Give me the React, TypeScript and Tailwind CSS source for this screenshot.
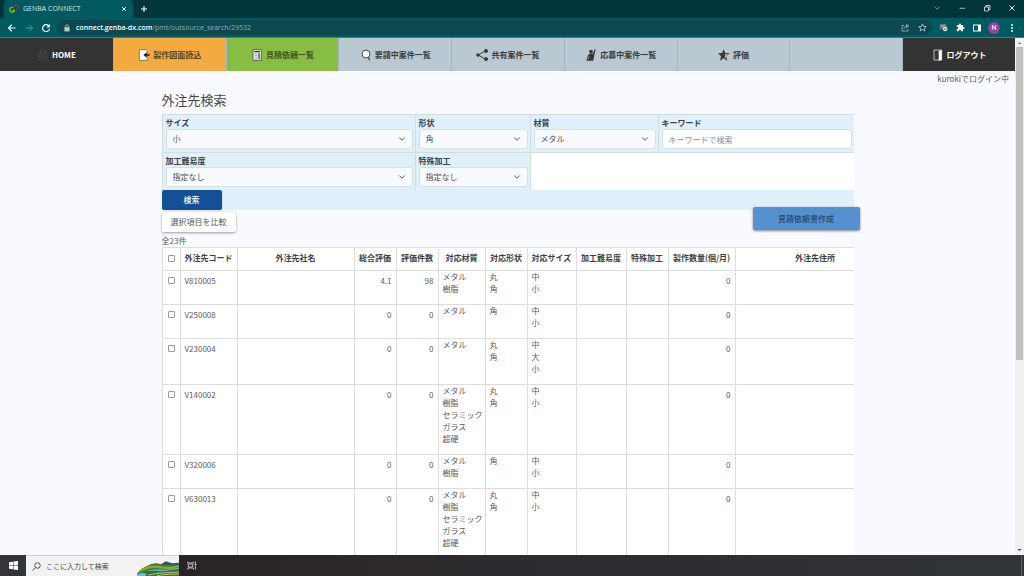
import React from "react";

const materialsAll = ["メタル", "樹脂", "セラミック", "ガラス", "超硬"];

type Row = {
  code: string;
  score: string;
  count: string;
  materials: string[];
  shapes: string[];
  sizes: string[];
};

const rows: Row[] = [
  { code: "V810005", score: "4.1", count: "98", materials: ["メタル", "樹脂"], shapes: ["丸", "角"], sizes: ["中", "小"] },
  { code: "V250008", score: "0", count: "0", materials: ["メタル"], shapes: ["角"], sizes: ["中", "小"] },
  { code: "V230004", score: "0", count: "0", materials: ["メタル"], shapes: ["丸", "角"], sizes: ["中", "大", "小"] },
  { code: "V140002", score: "0", count: "0", materials: materialsAll, shapes: ["丸", "角"], sizes: ["中", "小"] },
  { code: "V320006", score: "0", count: "0", materials: ["メタル", "樹脂"], shapes: ["角"], sizes: ["中", "小"] },
  { code: "V630013", score: "0", count: "0", materials: materialsAll, shapes: ["丸", "角"], sizes: ["中", "小"] },
];

function TabStrip() {
  return (
    <div className="flex h-[18px] items-stretch bg-[#00363b] text-white">
      <div className="ml-1 flex w-[129px] items-center rounded-t-[4px] bg-[#005a5f] pr-[6px] pl-[5px]">
        <svg className="h-[10px] w-[10px]" viewBox="0 0 30 30" fill="none" aria-hidden="true">
          <path d="M13 11A7 7 0 1 0 16 20H10" stroke="#7fc31c" strokeWidth="4" />
          <path d="M15 15A7 7 0 1 1 21 17" stroke="#d7182a" strokeWidth="4" />
        </svg>
        <span className="ml-1 flex-1 font-['Open_Sans','Noto_Sans',sans-serif] text-[7px] leading-[12px] text-[#d5e5e6]">GENBA CONNECT</span>
        <button type="button" aria-label="タブを閉じる" className="flex">
          <svg className="h-[6px] w-[6px]" viewBox="0 0 12 12" stroke="#fff" strokeWidth="2" aria-hidden="true">
            <path d="M2 2l8 8M10 2l-8 8" />
          </svg>
        </button>
      </div>
      <button type="button" aria-label="新しいタブ" className="ml-[7px] flex items-center">
        <svg className="h-[8px] w-[8px]" viewBox="0 0 16 16" stroke="#fff" strokeWidth="2.200" aria-hidden="true">
          <path d="M8 2v12M2 8h12" />
        </svg>
      </button>
      <div className="ml-auto flex items-center gap-[17px] pr-[8px] pb-[3px]">
        <svg className="h-[8px] w-[8px]" viewBox="0 0 16 16" stroke="#9fb9bb" strokeWidth="1.600" fill="none" aria-hidden="true">
          <path d="M3 5.500l5 5 5-5" />
        </svg>
        <svg className="h-[8px] w-[8px]" viewBox="0 0 16 16" stroke="#cfdddd" strokeWidth="1.600" aria-hidden="true">
          <path d="M3 8.500h11" />
        </svg>
        <svg className="h-[8px] w-[8px]" viewBox="0 0 16 16" stroke="#e6eeee" strokeWidth="1.600" fill="none" aria-hidden="true">
          <path d="M3 6h8v8H3zM6 6V3h8v8h-3" />
        </svg>
        <svg className="h-[8px] w-[8px]" viewBox="0 0 16 16" stroke="#fff" strokeWidth="1.800" aria-hidden="true">
          <path d="M3 3l10 10M13 3L3 13" />
        </svg>
      </div>
    </div>
  );
}

function AddressBar() {
  return (
    <div className="flex h-[20px] items-center border-b border-[#2d8386] bg-[#005a5f] pr-[7px] pl-[7px]">
      <div className="flex items-center gap-[7px]">
        <svg className="h-[10px] w-[10px]" viewBox="0 0 20 20" stroke="#fff" strokeWidth="2.200" fill="none" aria-hidden="true">
          <path d="M17 10H3M9.500 3.500L3 10l6.500 6.500" />
        </svg>
        <svg className="h-[10px] w-[10px]" viewBox="0 0 20 20" stroke="#5f999b" strokeWidth="2" fill="none" aria-hidden="true">
          <path d="M3 10h14M10.500 3.500L17 10l-6.500 6.500" />
        </svg>
        <svg className="h-[10px] w-[10px]" viewBox="0 0 20 20" fill="none" aria-hidden="true">
          <path d="M16 6.500A7 7 0 1 0 17 11.500" stroke="#fff" strokeWidth="2.400" />
          <path d="M18 2v7h-7z" fill="#fff" />
        </svg>
      </div>
      <div className="ml-[6px] flex h-[15px] flex-1 items-center rounded-full bg-[#0c484f] pr-[5px] pl-[6px]">
        <svg className="h-[8px] w-[8px]" viewBox="0 0 14 14" aria-hidden="true">
          <path d="M2.500 5.500h9V13h-9z" fill="#b9cacb" />
          <path d="M4.500 6V4a2.500 2.500 0 0 1 5 0v2" stroke="#b9cacb" strokeWidth="1.400" fill="none" />
        </svg>
        <div className="ml-[5px] flex-1 font-['Open_Sans','Noto_Sans',sans-serif] text-[7px] leading-[12px] text-[#8fb0b2]">
          <span className="font-semibold text-white">connect.genba-dx.com</span>/pmt/outsource_search/29532
        </div>
        <svg className="h-[9px] w-[9px]" viewBox="0 0 18 18" stroke="#a8bfc1" strokeWidth="1.500" fill="none" aria-hidden="true">
          <path d="M6 5H2v11h12v-4M6 12c0-4 3-6 7-6M11 2.500L16 6l-5 3.500z" />
        </svg>
        <svg className="ml-[8px] h-[9px] w-[9px]" viewBox="0 0 18 18" stroke="#cfdfe0" strokeWidth="1.500" fill="none" aria-hidden="true">
          <path d="M9 1.800l2.200 4.900 5.300.5-4 3.500 1.200 5.200L9 13.200l-4.700 2.700 1.200-5.200-4-3.500 5.300-.5z" />
        </svg>
      </div>
      <div className="ml-[7px] flex items-center">
        <svg className="h-[9px] w-[9px]" viewBox="0 0 18 18" aria-hidden="true">
          <rect x="1" y="2" width="14" height="11" rx="2" fill="#6c6f70" />
          <path d="M4 5h8M4 8h8" stroke="#b0b4b4" strokeWidth="1.500" />
          <circle cx="12.500" cy="12" r="4.500" fill="#eee" />
          <path d="M10 12h5" stroke="#333" strokeWidth="1.800" />
        </svg>
        <svg className="ml-[8px] h-[9px] w-[9px]" viewBox="0 0 24 24" fill="#fff" aria-hidden="true">
          <path d="M20.500 11H19V7a2 2 0 0 0-2-2h-4V3.500a2.500 2.500 0 0 0-5 0V5H4a2 2 0 0 0-2 2v3.800h1.500a2.700 2.700 0 0 1 0 5.400H2V20a2 2 0 0 0 2 2h3.800v-1.500a2.700 2.700 0 0 1 5.400 0V22H17a2 2 0 0 0 2-2v-4h1.500a2.500 2.500 0 0 0 0-5z" />
        </svg>
        <svg className="ml-[8px] h-[8px] w-[8px]" viewBox="0 0 16 16" aria-hidden="true">
          <rect x="0" y="1" width="16" height="14" fill="#fff" />
          <rect x="2" y="3" width="8" height="10" fill="#005a5f" />
        </svg>
        <span className="ml-[7px] flex h-[12px] w-[12px] items-center justify-center rounded-full bg-[#8e44a0] font-['Roboto',sans-serif] text-[7px] leading-[12px] text-white">N</span>
        <svg className="ml-[7px] h-[10px] w-[10px]" viewBox="0 0 20 20" fill="#fff" aria-hidden="true">
          <circle cx="10" cy="4" r="1.900" />
          <circle cx="10" cy="10" r="1.900" />
          <circle cx="10" cy="16" r="1.900" />
        </svg>
      </div>
    </div>
  );
}

const navIcon = "h-[12px] w-[12px] shrink-0";

const icons = {
  home: (
    <svg className={navIcon} viewBox="0 0 36 36" stroke="#4c4c4c" strokeWidth="2.500" fill="none" aria-hidden="true">
      <path d="M10 10H4v23h14M10 28V3h12l7 7v6M21 3v8h8" />
      <circle cx="22" cy="22" r="6" />
      <path d="M27 27l6 7" />
    </svg>
  ),
  drawing: (
    <svg className={navIcon} viewBox="0 0 36 36" aria-hidden="true">
      <path d="M4 2h20l4 4v28H4z" fill="#fff" stroke="#6a5130" strokeWidth="2" />
      <path d="M35 15.500h-9V10l-10 8 10 8v-5.500h9z" fill="#222" />
    </svg>
  ),
  quote: (
    <svg className={navIcon} viewBox="0 0 36 36" aria-hidden="true">
      <path d="M6 2h25v32H6z" fill="#f0f0ee" stroke="#4d4d45" strokeWidth="2.500" />
      <path d="M10 8h17" stroke="#333" strokeWidth="4" />
      <path d="M11 15h8M11 20h8M11 25h8M11 30h8" stroke="#999" strokeWidth="2.400" />
      <path d="M24 13v17" stroke="#444" strokeWidth="4" />
    </svg>
  ),
  search: (
    <svg className={navIcon} viewBox="0 0 36 36" aria-hidden="true">
      <circle cx="18" cy="15" r="12" fill="#fff" stroke="#4a4a4a" strokeWidth="3" />
      <path d="M25 25l4 9" stroke="#4a4a4a" strokeWidth="4" />
    </svg>
  ),
  share: (
    <svg className={navIcon} viewBox="0 0 36 36" fill="#3c3735" stroke="#3c3735" strokeWidth="2.800" aria-hidden="true">
      <path d="M30 5L6 18l24 13" fill="none" />
      <circle cx="30" cy="6" r="4.500" />
      <circle cx="6" cy="18" r="4" />
      <circle cx="30" cy="30" r="4.500" />
    </svg>
  ),
  apply: (
    <svg className={navIcon} viewBox="0 0 36 36" fill="#3a3432" aria-hidden="true">
      <circle cx="18" cy="8" r="5.500" />
      <path d="M28 1l4 1-4 15-3 18H4l5-16 5-5h9l2-3z" />
      <path d="M12 22l-3 10" stroke="#b9c7d0" strokeWidth="1.500" />
    </svg>
  ),
  star: (
    <svg className={navIcon} viewBox="0 0 36 36" aria-hidden="true">
      <path d="M17 1l5 11 13 1-10 9 3 13-11-7-11 7 3-13-9-9 12-1z" fill="#3d3937" />
      <path d="M22 14l9 1.500-7 6 2 8-6-4z" fill="#aab5bc" />
    </svg>
  ),
  door: (
    <svg className={navIcon} viewBox="0 0 36 36" aria-hidden="true">
      <path d="M6 3h23v30H6z" fill="#333" stroke="#d8d8d8" strokeWidth="2.500" />
      <path d="M20 6l9-3v30l-9 2z" fill="#fff" />
    </svg>
  ),
};

function NavItem({ icon, label, tone }: { icon?: React.ReactNode; label: string; tone: string }) {
  return (
    <a href="#" className={`flex items-center justify-center gap-[3px] border-l border-[#a4b5c0] font-bold whitespace-nowrap first:border-l-0 ${tone}`}>
      {icon}
      {label}
    </a>
  );
}

function Field({ id, label, children }: { id: string; label: string; children: React.ReactNode }) {
  return (
    <div className="border-t border-l border-[#d2dde3] bg-[#dff0fa] pt-[2px] pr-[2px] pb-[3px] pl-[3px]">
      <label htmlFor={id} className="block font-bold text-[#3c4348]">
        {label}
      </label>
      {children}
    </div>
  );
}

function Select({ id, options }: { id: string; options: string[] }) {
  return (
    <div className="relative">
      <select id={id} className="block h-[20px] w-full appearance-none rounded-[3px] border border-[#d5dfe6] bg-[#f9faff] px-[6px] text-[#4f4f4f]">
        {options.map((o) => (
          <option key={o}>{o}</option>
        ))}
      </select>
      <svg className="pointer-events-none absolute top-[6px] right-[7px] h-[8px] w-[8px]" viewBox="0 0 16 16" fill="none" stroke="#4d545a" strokeWidth="2" strokeLinecap="round" strokeLinejoin="round" aria-hidden="true">
        <path d="M3 5.500l5 5 5-5" />
      </svg>
    </div>
  );
}

function Check({ label }: { label: string }) {
  return (
    <input
      type="checkbox"
      aria-label={label}
      className="mx-auto block h-[7px] w-[7px] appearance-none rounded-[1px] border border-[#999999] bg-white checked:bg-[#165094]"
    />
  );
}

function Lines({ items }: { items: string[] }) {
  return (
    <td className="border border-[#dedede] px-[4px] pb-[9px] whitespace-nowrap">
      {items.map((t) => (
        <div key={t}>{t}</div>
      ))}
    </td>
  );
}

function SupplierTable() {
  const cell = "border border-[#dedede] px-[4px] pt-[4px]";
  const heads = ["外注先コード", "外注先社名", "総合評価", "評価件数", "対応材質", "対応形状", "対応サイズ", "加工難易度", "特殊加工", "製作数量(個/月)", "外注先住所"];
  return (
    <div className="overflow-hidden">
      <table className="w-[733px] table-fixed border-collapse bg-white">
        <colgroup>
          <col className="w-[18px]" />
          <col className="w-[57px]" />
          <col className="w-[117px]" />
          <col className="w-[42px]" />
          <col className="w-[42px]" />
          <col className="w-[47px]" />
          <col className="w-[42px]" />
          <col className="w-[49px]" />
          <col className="w-[50px]" />
          <col className="w-[42px]" />
          <col className="w-[67px]" />
          <col className="w-[160px]" />
        </colgroup>
        <thead>
          <tr className="h-[23px] text-[#3f3f3f]">
            <th className="border border-[#dedede] pb-[2px]">
              <Check label="すべて選択" />
            </th>
            {heads.map((h) => (
              <th key={h} className="border border-[#dedede] pb-[2px] font-bold whitespace-nowrap">
                {h}
              </th>
            ))}
          </tr>
        </thead>
        <tbody>
          {rows.map((r) => (
            <tr key={r.code} className="align-top">
              <td className="border border-[#dedede] pt-[6px]">
                <Check label={r.code} />
              </td>
              <td className={cell}>{r.code}</td>
              <td className={cell} />
              <td className={`${cell} text-right`}>{r.score}</td>
              <td className={`${cell} text-right`}>{r.count}</td>
              <Lines items={r.materials} />
              <Lines items={r.shapes} />
              <Lines items={r.sizes} />
              <td className={cell} />
              <td className={cell} />
              <td className={`${cell} text-right`}>0</td>
              <td className={cell} />
            </tr>
          ))}
        </tbody>
      </table>
    </div>
  );
}

function Scrollbar() {
  return (
    <div className="flex w-[9px] shrink-0 flex-col items-center bg-[#f0f0f0] py-[2px]" aria-hidden="true">
      <svg className="h-[6px] w-[5px]" viewBox="0 0 10 12">
        <path d="M1 8l4-4 4 4z" fill="#8a8a8a" />
      </svg>
      <div className="mt-px h-[61%] w-[7px] bg-[#c1c1c1]" />
      <svg className="mt-auto h-[6px] w-[5px]" viewBox="0 0 10 12">
        <path d="M1 4l4 4 4-4z" fill="#444" />
      </svg>
    </div>
  );
}

function Taskbar() {
  return (
    <div className="flex h-[21px] shrink-0 items-stretch bg-linear-to-r from-[#281e22] via-[#2d2b2f] to-[#303438]">
      <button type="button" aria-label="スタート" className="flex w-[26px] items-center justify-center bg-[#32353a]">
        <svg className="h-[9px] w-[9px]" viewBox="0 0 18 18" fill="#fff" aria-hidden="true">
          <path d="M0 2.500L8 1.400V8.500H0zM9 1.200L18 0v8.500H9zM0 9.500h8v7.100L0 15.500zM9 9.500h9V18l-9-1.200z" />
        </svg>
      </button>
      <div className="flex w-[153px] items-center border-t border-[#cfcfcf] bg-[#f2f2f2] pl-[6px]">
        <svg className="h-[9px] w-[9px] shrink-0" viewBox="0 0 18 18" fill="none" stroke="#333" strokeWidth="1.700" aria-hidden="true">
          <circle cx="11" cy="7" r="5.500" />
          <path d="M7 11l-6 6" />
        </svg>
        <input
          type="text"
          aria-label="検索"
          placeholder="ここに入力して検索"
          className="ml-[5px] w-0 flex-1 bg-transparent text-[7px] leading-[12px] placeholder:text-[#444]"
        />
        <svg className="h-[15px] w-[42px] shrink-0 self-end" viewBox="0 0 126 45" aria-hidden="true">
          <path d="M40 10l18-3 14 3 14-9 20 6 20-2v40H20z" fill="#2e5960" />
          <path d="M0 38C14 20 34 10 56 10s50 4 70 2v33H0z" fill="#4d7c2d" />
          <path d="M8 28c26-16 44-16 66-12s36 0 52-4v6c-20 6-40 8-60 4S30 22 8 34z" fill="#93a62c" />
          <path d="M30 30c26-8 40-2 58-4s24-6 38-6v8c-20 6-50 8-96 6z" fill="#4fbcd3" />
          <path d="M0 38c20-8 40-10 60-8 26 2 46-4 66-6v21H0z" fill="#3c6f31" />
          <path d="M0 41c10-6 22-6 30-1l-6 5H0z" fill="#59c3d8" />
          <path d="M34 42c30-8 60-6 92-9M60 44c22-5 44-4 66-5" stroke="#d9d08a" strokeWidth="2.500" fill="none" />
        </svg>
      </div>
      <button type="button" aria-label="タスクビュー" className="ml-[8px] flex items-center">
        <svg className="h-[9px] w-[10px]" viewBox="0 0 30 27" fill="none" stroke="#e2e2e2" strokeWidth="2.400" aria-hidden="true">
          <path d="M2 2v4h17V2M2 25v-4h17v4M4 9h13v9H4zM25 1v7M25 13v13" />
          <path d="M23 10h5" strokeWidth="4" />
        </svg>
      </button>
      <div className="mr-[2px] ml-auto w-px bg-[#5d6064]" />
    </div>
  );
}

export default function App() {
  const blue = "bg-[#bac8d1] text-[#3d3d3d]";
  return (
    <div className="flex h-screen flex-col overflow-hidden bg-[#f9faff] font-['Noto_Sans_CJK_JP',sans-serif] text-[8px] leading-[12px] text-[#5a5a5a]">
      <header className="shrink-0">
        <TabStrip />
        <AddressBar />
      </header>
      <div className="flex min-h-0 flex-1">
        <div className="min-w-0 flex-1 overflow-hidden">
          <nav className="grid h-[33px] grid-cols-9">
            <NavItem icon={icons.home} label="HOME" tone="bg-[#333333] text-white" />
            <NavItem icon={icons.drawing} label="製作図面読込" tone="bg-[#f2aa41] text-[#5b4526]" />
            <NavItem icon={icons.quote} label="見積依頼一覧" tone="bg-[#88bd43] text-[#3f5227]" />
            <NavItem icon={icons.search} label="要請中案件一覧" tone={blue} />
            <NavItem icon={icons.share} label="共有案件一覧" tone={blue} />
            <NavItem icon={icons.apply} label="応募中案件一覧" tone={blue} />
            <NavItem icon={icons.star} label="評価" tone={blue} />
            <NavItem label="" tone={blue} />
            <NavItem icon={icons.door} label="ログアウト" tone="bg-[#333333] text-white" />
          </nav>
          <p className="pt-[2px] pr-[6px] text-right">kurokiでログイン中</p>
          <main className="mx-auto mt-[5px] max-w-[692px]">
            <h1 className="mb-[4px] text-[13px] leading-[20px] text-[#4a4a4a]">外注先検索</h1>
            <form className="relative" onSubmit={(e) => e.preventDefault()}>
              <div className="grid grid-cols-[253fr_115fr_128fr_196fr] bg-white">
                <Field id="size" label="サイズ">
                  <Select id="size" options={["小", "中", "大"]} />
                </Field>
                <Field id="shape" label="形状">
                  <Select id="shape" options={["角", "丸"]} />
                </Field>
                <Field id="material" label="材質">
                  <Select id="material" options={materialsAll} />
                </Field>
                <Field id="keyword" label="キーワード">
                  <input
                    id="keyword"
                    type="text"
                    placeholder="キーワードで検索"
                    className="block h-[20px] w-full rounded-[3px] border border-[#d5dfe6] bg-white px-[6px] placeholder:text-[#8a8f94]"
                  />
                </Field>
                <Field id="difficulty" label="加工難易度">
                  <Select id="difficulty" options={["指定なし"]} />
                </Field>
                <Field id="special" label="特殊加工">
                  <Select id="special" options={["指定なし"]} />
                </Field>
                <div className="col-span-2 border-t border-l border-[#d2dde3]" />
              </div>
              <div className="bg-[#dff0fa]">
                <button type="submit" className="block h-[20px] w-[60px] rounded-[2px] bg-[#165094] font-medium text-white shadow-sm">
                  検索
                </button>
              </div>
              <button type="button" className="absolute right-[-6px] bottom-[-20px] h-[23px] w-[107px] rounded-[2px] bg-[#5590cf] font-medium text-[#26476d] shadow-sm shadow-black/40">
                見積依頼書作成
              </button>
            </form>
            <button type="button" className="mt-[2px] block h-[20px] rounded-[2px] bg-white px-[9px] shadow-sm shadow-black/30">
              選択項目を比較
            </button>
            <p className="mt-[3px]">全23件</p>
            <SupplierTable />
          </main>
        </div>
        <Scrollbar />
      </div>
      <Taskbar />
    </div>
  );
}
